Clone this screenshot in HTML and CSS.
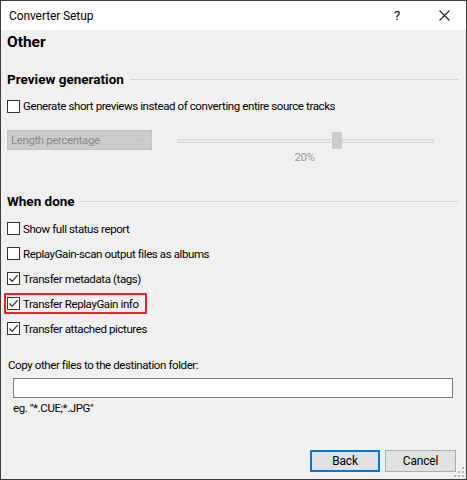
FILE: index.html
```html
<!DOCTYPE html>
<html>
<head>
<meta charset="utf-8">
<link rel="stylesheet" href="styles.css">
</head>
<body>
<div class="window">
  <div class="titlebar">
    <span class="title">Converter Setup</span>
    <span class="help">?</span>
    <svg class="close" width="11" height="11" viewBox="0 0 11 11"><path d="M0.5 0.5 L10.5 10.5 M10.5 0.5 L0.5 10.5" stroke="#222" stroke-width="1.1" fill="none"/></svg>
  </div>
  <div class="content">
    <div class="page-title">Other</div>

    <div class="group-head"><span>Preview generation</span><i class="rule"></i></div>
    <label class="check first"><span class="box"></span><span>Generate short previews instead of converting entire source tracks</span></label>

    <div class="preview-row">
      <div class="combo"><span>Length percentage</span>
        <svg width="9" height="6" viewBox="0 0 9 6"><path d="M0.5 0.5 L4.5 4.5 L8.5 0.5" stroke="#bdbdbd" fill="none"/></svg>
      </div>
      <div class="slider">
        <div class="track-wrap"><div class="track"></div><div class="thumb"></div></div>
        <div class="pct">20%</div>
      </div>
    </div>

    <div class="group-head done"><span>When done</span><i class="rule"></i></div>
    <div class="checks">
      <label class="check"><span class="box"></span><span>Show full status report</span></label>
      <label class="check"><span class="box"></span><span>ReplayGain-scan output files as albums</span></label>
      <label class="check"><span class="box on"><svg width="11" height="11" viewBox="0 0 11 11"><path d="M1.5 5.5 L4.2 8.3 L9.6 2.2" stroke="#2a2a2a" stroke-width="1.2" fill="none"/></svg></span><span>Transfer metadata (tags)</span></label>
      <label class="check"><span class="highlight"><span class="box on"><svg width="11" height="11" viewBox="0 0 11 11"><path d="M1.5 5.5 L4.2 8.3 L9.6 2.2" stroke="#2a2a2a" stroke-width="1.2" fill="none"/></svg></span><span>Transfer ReplayGain info</span></span></label>
      <label class="check"><span class="box on"><svg width="11" height="11" viewBox="0 0 11 11"><path d="M1.5 5.5 L4.2 8.3 L9.6 2.2" stroke="#2a2a2a" stroke-width="1.2" fill="none"/></svg></span><span>Transfer attached pictures</span></label>
    </div>

    <div class="copy-label">Copy other files to the destination folder:</div>
    <div class="input"></div>
    <div class="hint">eg. "*.CUE;*.JPG"</div>

    <div class="buttons">
      <button class="btn default">Back</button>
      <button class="btn">Cancel</button>
    </div>
  </div>
  <svg class="grip" width="10" height="10" viewBox="0 0 10 10">
    <rect x="8" y="0" width="2" height="2" fill="#b8b8b8"/>
    <rect x="4" y="4" width="2" height="2" fill="#b8b8b8"/><rect x="8" y="4" width="2" height="2" fill="#b8b8b8"/>
    <rect x="0" y="8" width="2" height="2" fill="#b8b8b8"/><rect x="4" y="8" width="2" height="2" fill="#b8b8b8"/><rect x="8" y="8" width="2" height="2" fill="#b8b8b8"/>
  </svg>
</div>
</body>
</html>
```
FILE: styles.css
```css
* { box-sizing: border-box; }
html, body { margin: 0; padding: 0; }
body {
  font-family: Roboto, "Noto Sans", sans-serif;
  font-size: 11.5px;
  letter-spacing: -0.4px;
  color: #000;
  background: #fff;
}
.window {
  position: relative;
  width: 467px;
  height: 480px;
  border: 1px solid #3c3c3c;
  display: flex;
  flex-direction: column;
  background: #f0f0f0;
}
.titlebar {
  height: 29px;
  background: #fff;
  display: flex;
  align-items: center;
  padding-left: 8px;
  flex: none;
}
.title { flex: 1; font-size: 12px; letter-spacing: -0.1px; }
.help { width: 10px; margin-right: 35px; font-size: 13px; letter-spacing: 0; }
.close { margin-right: 16px; }
.content {
  flex: 1;
  display: flex;
  flex-direction: column;
  padding: 0 8px 0 6px;
}
.page-title {
  font-weight: bold;
  font-size: 15.5px;
  letter-spacing: 0;
  height: 20px;
  line-height: 20px;
  margin-top: 2px;
}
.group-head {
  display: flex;
  align-items: center;
  height: 18px;
  margin-top: 18px;
  font-weight: bold;
  font-size: 13.5px;
  letter-spacing: 0;
}
.group-head .rule {
  flex: 1;
  height: 1px;
  background: #d4d4d4;
  margin-left: 6px;
}
.group-head.done { margin-top: 42px; }
.check {
  display: flex;
  align-items: center;
  height: 25px;
}
.check.first { height: 18px; margin-top: 9px; }
.box {
  width: 13px;
  height: 13px;
  border: 1px solid #333;
  background: #fff;
  margin-right: 3px;
  display: flex;
  align-items: center;
  justify-content: center;
  flex: none;
}
.highlight {
  display: flex;
  align-items: center;
  height: 21px;
  border: 2px solid #e8202a;
  border-radius: 1px;
  margin-left: -3px;
  padding: 0 6px 0 1px;
}
.checks { margin-top: 6px; }
.preview-row {
  display: flex;
  margin-top: 15px;
  height: 20px;
}
.combo {
  width: 145px;
  height: 20px;
  background: #cccccc;
  border: 1px solid #c4c4c4;
  color: #8a8a8a;
  display: flex;
  align-items: center;
  justify-content: space-between;
  padding: 0 6px 0 3px;
}
.slider {
  margin-left: 25px;
  width: 257px;
  display: flex;
  flex-direction: column;
  align-items: center;
}
.track-wrap {
  position: relative;
  flex: none;
  width: 257px;
  height: 20px;
  display: flex;
  align-items: center;
}
.track {
  width: 100%;
  height: 4px;
  background: #e7e7e7;
  border: 1px solid #d6d6d6;
  margin-top: 2px;
}
.thumb {
  position: absolute;
  left: 155px;
  top: 2px;
  width: 10px;
  height: 17px;
  background: #cccccc;
}
.pct {
  flex: none;
  color: #9a9a9a;
  line-height: 15px;
  margin-left: -2px;
}
.copy-label {
  margin-top: 16px;
  line-height: 16px;
  padding-left: 1px;
}
.input {
  margin: 5px 5px 0 6px;
  height: 20px;
  background: #fff;
  border: 1px solid #7a7a7a;
}
.hint {
  margin-top: 2px;
  padding-left: 6px;
  line-height: 16px;
}
.buttons {
  margin-top: auto;
  margin-bottom: 7px;
  display: flex;
  justify-content: flex-end;
  gap: 5px;
  padding-right: 2px;
}
.btn {
  width: 71px;
  height: 22px;
  font-family: inherit;
  font-size: 12px;
  letter-spacing: -0.2px;
  background: #e1e1e1;
  border: 1px solid #adadad;
  padding: 0;
  color: #000;
}
.btn.default { border: 2px solid #0078d7; width: 70px; }
.grip { position: absolute; right: 2px; bottom: 2px; }
```
